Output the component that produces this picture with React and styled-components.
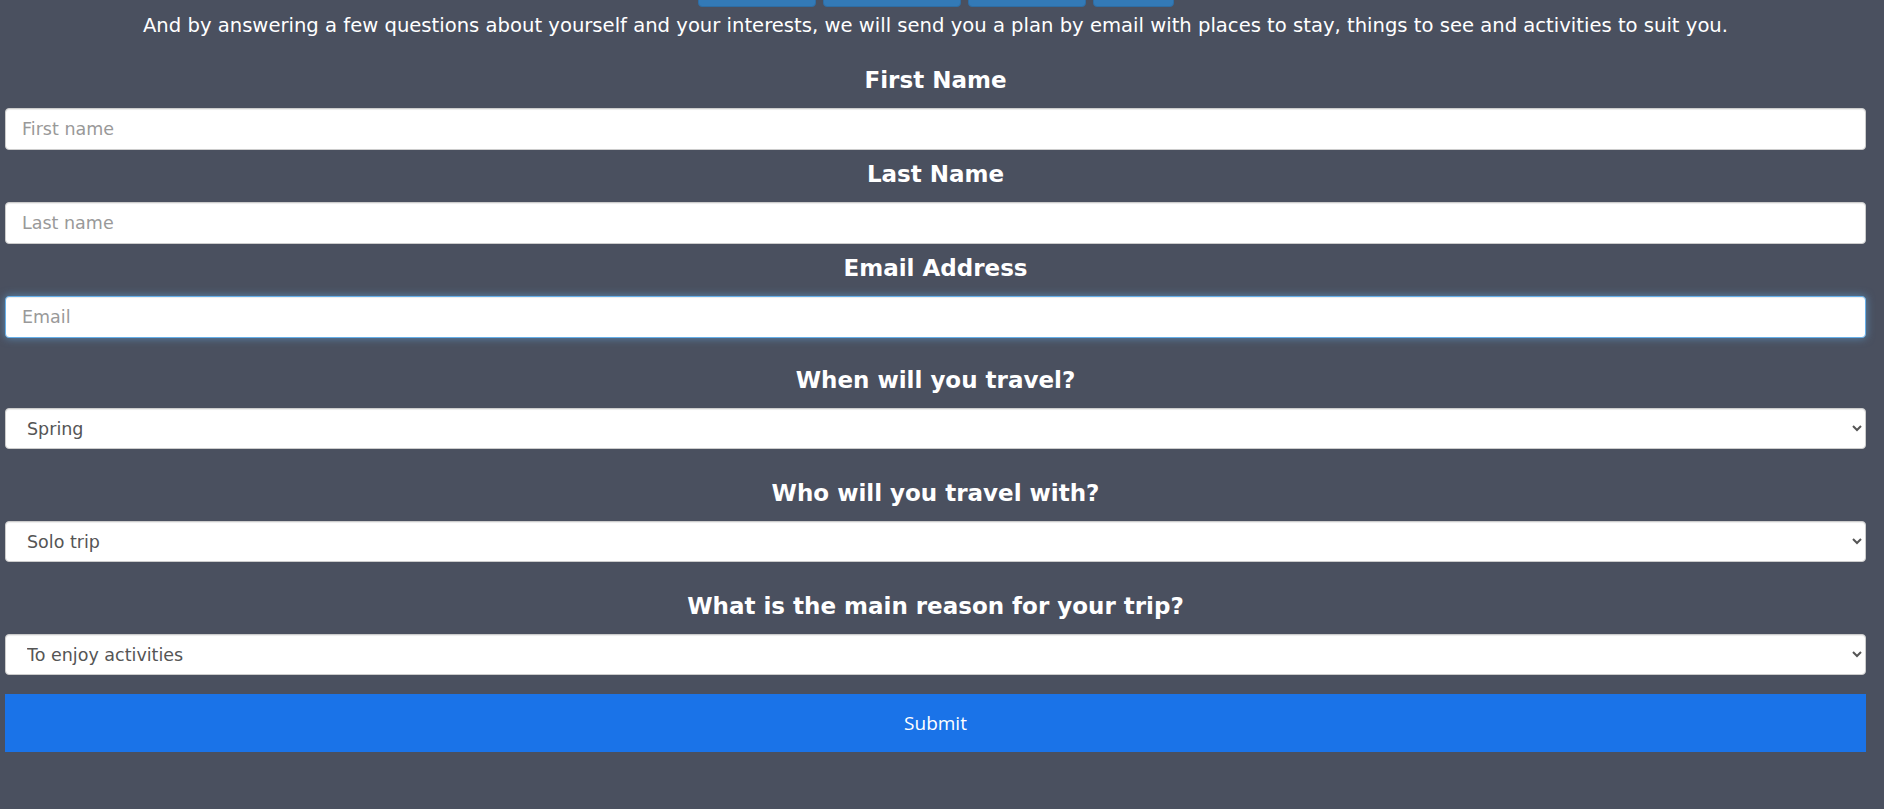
import styled, { createGlobalStyle } from "styled-components";

const GlobalStyle = createGlobalStyle`
  html, body {
    margin: 0;
    padding: 0;
    background: #4a505f;
  }
  body {
    font-family: "DejaVu Sans", "Liberation Sans", sans-serif;
    color: #fff;
  }
  * { box-sizing: border-box; }
`;

// nav scrolled mostly out of view, only the bottom edge of the buttons shows
const navItems = [
  { label: "Home", w: 118 },
  { label: "Destinations", w: 138 },
  { label: "Activities", w: 118 },
  { label: "Plan", w: 81 },
];

const fields = [
  { title: "First Name", placeholder: "First name" },
  { title: "Last Name", placeholder: "Last name" },
  { title: "Email Address", placeholder: "Email", focused: true },
];

const choices = [
  { title: "When will you travel?", options: ["Spring", "Summer", "Autumn", "Winter"] },
  { title: "Who will you travel with?", options: ["Solo trip", "Partner", "Family", "Friends"] },
  {
    title: "What is the main reason for your trip?",
    options: ["To enjoy activities", "To relax", "To explore culture", "To eat well"],
  },
];

export default function App() {
  return (
    <>
      <GlobalStyle />
      <Page>
        <Nav>
          {navItems.map((n) => (
            <NavButton key={n.label} $w={n.w} aria-label={n.label} />
          ))}
        </Nav>
        <Intro>
          And by answering a few questions about yourself and your interests, we will send you a plan by
          email with places to stay, things to see and activities to suit you.
        </Intro>
        <Form onSubmit={(e) => e.preventDefault()}>
          {fields.map((f, i) => (
            <Field key={f.title} $gap={i === 0 ? 28 : 10}>
              <Label>{f.title}</Label>
              <TextInput
                type={f.title === "Email Address" ? "email" : "text"}
                placeholder={f.placeholder}
                $focused={f.focused}
                autoFocus={f.focused}
              />
            </Field>
          ))}
          {choices.map((c, i) => (
            <Field key={c.title} $gap={i === 0 ? 28 : 30}>
              <Label>{c.title}</Label>
              <Select defaultValue={c.options[0]}>
                {c.options.map((o) => (
                  <option key={o}>{o}</option>
                ))}
              </Select>
            </Field>
          ))}
          <SubmitButton type="submit">Submit</SubmitButton>
        </Form>
      </Page>
    </>
  );
}

const Page = styled.div`
  min-height: 809px;
  padding: 0 18px 0 5px;
  overflow: hidden;
`;

const Nav = styled.div`
  display: flex;
  justify-content: center;
  gap: 7px;
  margin-top: -27px;
`;

const NavButton = styled.button`
  width: ${(p) => p.$w}px;
  height: 34px;
  padding: 0;
  background: #337ab7;
  border: 1px solid #2e6da4;
  border-radius: 4px;
`;

const Intro = styled.p`
  margin: 7px 0 0;
  text-align: center;
  font-size: 19.6px;
  line-height: 24px;
  color: #fff;
`;

const Form = styled.form`
  display: flex;
  flex-direction: column;
`;

const Field = styled.div`
  display: flex;
  flex-direction: column;
  margin-top: ${(p) => p.$gap}px;
`;

const Label = styled.h3`
  margin: 0 0 14px;
  text-align: center;
  font-size: 23px;
  line-height: 28px;
  font-weight: 700;
  color: #fff;
`;

const TextInput = styled.input`
  width: 100%;
  height: 42px;
  padding: 0 16px;
  font-family: "DejaVu Sans", sans-serif;
  font-size: 17.5px;
  color: #555;
  background: #fff;
  border: 1px solid ${(p) => (p.$focused ? "#66afe9" : "#ccc")};
  border-radius: 4px;
  outline: none;
  box-shadow: inset 0 1px 1px rgba(0, 0, 0, 0.075)
    ${(p) => (p.$focused ? ", 0 0 8px rgba(102, 175, 233, 0.6)" : "")};

  &::placeholder {
    color: #999;
  }
`;

const Select = styled.select`
  width: 100%;
  height: 41px;
  padding: 0 6px 0 17px;
  font-family: "DejaVu Sans", sans-serif;
  font-size: 17.5px;
  color: #555;
  background: #fff;
  border: 1px solid #ccc;
  border-radius: 4px;
  box-shadow: inset 0 1px 1px rgba(0, 0, 0, 0.075);
`;

const SubmitButton = styled.button`
  margin-top: 19px;
  width: 100%;
  height: 58px;
  border: none;
  border-radius: 0;
  background: #1a73e8;
  color: #fff;
  font-family: "Open Sans", sans-serif;
  font-size: 19px;
  cursor: pointer;
`;
